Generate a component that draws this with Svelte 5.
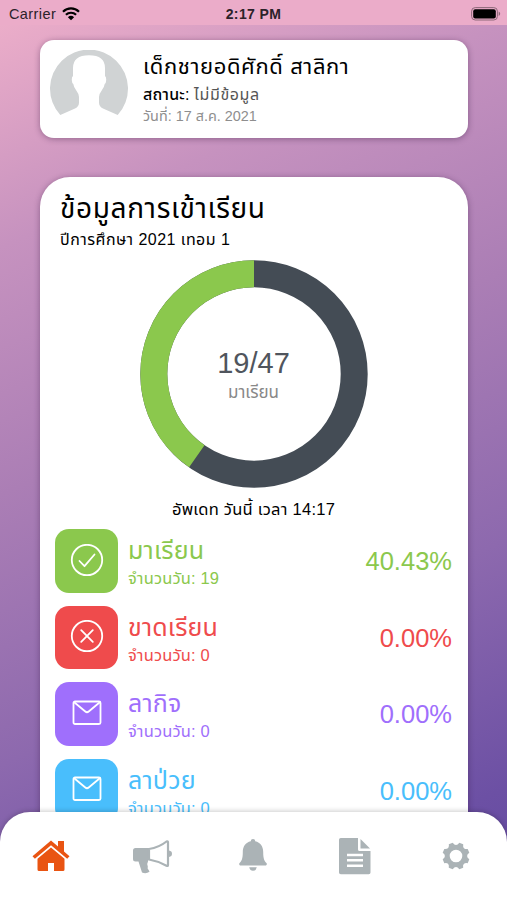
<script>
	let student = {
		name: 'เด็กชายอดิศักดิ์ สาลิกา',
		status: 'ไม่มีข้อมูล',
		date: '17 ส.ค. 2021'
	};

	let present = 19;
	let total = 47;

	let rows = [
		{ title: 'มาเรียน', days: 19, color: '#8bc84d', icon: 'check' },
		{ title: 'ขาดเรียน', days: 0, color: '#ef4b4c', icon: 'cross' },
		{ title: 'ลากิจ', days: 0, color: '#9f6ffc', icon: 'mail' },
		{ title: 'ลาป่วย', days: 0, color: '#49befc', icon: 'mail' }
	];

	const radius = 100.2;
	const circumference = 2 * Math.PI * radius;
	const arc = (present / total) * circumference;

	/**
	 * @param {number} days
	 */
	function percent(days) {
		return ((days / total) * 100).toFixed(2) + '%';
	}
</script>

<div class="app">
	<header class="status-bar">
		<div class="carrier">
			<span>Carrier</span>
			<svg width="18" height="14" viewBox="0 0 18 14">
				<path d="M1 4.7a11.5 11.5 0 0 1 16 0M3.9 7.8a7.4 7.4 0 0 1 10.2 0" />
				<path class="dot" d="M9 13.3 5.9 10.2a4.5 4.5 0 0 1 6.2 0z" />
			</svg>
		</div>
		<div class="clock">2:17 PM</div>
		<div class="battery">
			<svg width="30" height="14" viewBox="0 0 30 14">
				<rect class="case" x="0.6" y="0.6" width="25.8" height="12.4" rx="3.6" />
				<rect x="2.2" y="2.2" width="22.6" height="9.2" rx="2" />
				<path class="cap" d="M27.7 4.6c2 .9 2 3.5 0 4.4z" />
			</svg>
		</div>
	</header>

	<main>
		<section class="card profile">
			<svg class="avatar" width="78" height="66" viewBox="0 0 78 66">
				<path
					d="M10.3 65A39 39 0 1 1 67.700 65L53 58.500q-4-2-4-6V47q0-3 2.700-6.500 2.600-3.500 3-6.500 1.300-.5 1.500-4 .1-3-1.200-4V18Q55 5.200 39 5.200T23 18v8q-1.300 1-1.200 4 .2 3.500 1.500 4 .4 3 3 6.500Q29 44 29 47v5.500q0 4-4 6z"
				/>
			</svg>
			<div class="info">
				<div class="name">{student.name}</div>
				<div class="state"><b>สถานะ:</b> <span>{student.status}</span></div>
				<div class="date">วันที่: {student.date}</div>
			</div>
		</section>

		<section class="card attendance">
			<h1>ข้อมูลการเข้าเรียน</h1>
			<p class="term">ปีการศึกษา 2021 เทอม 1</p>

			<div class="chart">
				<svg width="228" height="228" viewBox="0 0 228 228">
					<g transform="rotate(-90 114 114)">
						<circle class="track" cx="114" cy="114" r={radius} />
						<circle
							class="value"
							cx="114"
							cy="114"
							r={radius}
							stroke-dasharray="{arc} {circumference - arc}"
							stroke-dashoffset={arc}
						/>
					</g>
				</svg>
				<div class="chart-label">
					<div class="count">{present}/{total}</div>
					<div class="caption">มาเรียน</div>
				</div>
			</div>

			<p class="updated">อัพเดท วันนี้ เวลา 14:17</p>

			<ul>
				{#each rows as row}
					<li style="color: {row.color};">
						<div class="tile" style="background-color: {row.color};">
							<svg width="34" height="34" viewBox="0 0 34 34">
								{#if row.icon === 'check'}
									<circle cx="17" cy="16" r="15.2" />
									<path d="m9.5 17 5 5.200L24.500 10.500" />
								{:else if row.icon === 'cross'}
									<circle cx="17" cy="16" r="15.2" />
									<path d="m11.2 10.200 11.600 11.600m0-11.600L11.200 21.800" />
								{:else}
									<rect x="3.500" y="4.500" width="27" height="22.500" rx="1.500" />
									<path d="m4.500 5.500 10.800 9q1.700 1.400 3.400 0l10.800-9" />
								{/if}
							</svg>
						</div>
						<div class="text">
							<div class="title">{row.title}</div>
							<div class="days">จำนวนวัน: {row.days}</div>
						</div>
						<div class="percent">{percent(row.days)}</div>
					</li>
				{/each}
			</ul>
		</section>
	</main>

	<nav>
		<div class="tab active">
			<svg width="40" height="40" viewBox="0 0 40 40">
				<path
					d="M20 4.500 1.500 20.200l2.400 2.600L20 9.200l16.200 13.600 2.300-2.600-5.500-4.700V5h-6v5.400z"
				/>
				<path d="M20 11.400 6.500 22.700v10.800q0 1.500 1.500 1.500h9v-8h6v8h9q1.500 0 1.500-1.500V22.700z" />
			</svg>
		</div>
		<div class="tab">
			<svg width="42" height="40" viewBox="0 0 42 40">
				<path
					d="M4.500 12H17v13.500q-1.500 2.500-.2 5-.8 2 1 3.800l.7 1.500q-3.500 2.500-7.500.7-1.700-5.500-3.500-11H4.500Q2 25.500 2 23v-8.500Q2 12 4.500 12z"
				/>
				<path class="horn" d="M18 13q10-1.500 17.500-7.500 1.500-.7 1.500 1v22.500q0 1.500-1.500.8Q27 25 18 23.500z" />
				<path d="M38 14.500q3 .5 3 3.200t-3 3.300z" />
			</svg>
		</div>
		<div class="tab">
			<svg width="32" height="40" viewBox="0 0 32 40">
				<path
					d="M16 3a2.200 2.200 0 0 0-2.200 2.300C8.500 6.500 5.800 10.700 5.800 16c0 7-1.300 9-3.200 11q-1.100 1.300.4 2.500h26q1.500-1.200.4-2.500c-1.900-2-3.200-4-3.200-11 0-5.300-2.700-9.500-8-10.700A2.200 2.200 0 0 0 16 3zM12.200 31.300h7.600q-.8 3.500-3.800 3.500t-3.800-3.500z"
				/>
			</svg>
		</div>
		<div class="tab">
			<svg width="34" height="40" viewBox="0 0 34 40">
				<path
					fill-rule="evenodd"
					d="M2.800 2H20v11.500q0 1.500 1.500 1.500H32.500v21.500q0 1.800-1.800 1.800H2.800Q1 38.300 1 36.500V3.800Q1 2 2.800 2zM9 17.800v2.400h16v-2.400zm0 5.200v2.600h16V23zm0 5.400V31h16v-2.600z"
				/>
				<path d="M22.500 3 32 12.500H22.500z" />
			</svg>
		</div>
		<div class="tab">
			<svg width="30" height="30" viewBox="0 0 30 30">
				<path
					fill-rule="evenodd"
					d="M11.700 1.700Q13.300 3.900 15 3.900t3.300-2.200l3.900 1.600Q21.800 6 23 7.200t3.700.8l1.600 3.700Q26.100 13.300 26.100 15t2.200 3.300l-1.600 3.900Q24 21.800 22.800 23t-.6 3.700l-3.900 1.600Q16.700 26.100 15 26.100t-3.300 2.200l-3.900-1.600Q8.200 24 7 22.800t-3.700-.6l-1.600-3.900Q3.900 16.700 3.900 15t-2.200-3.300L3.300 8Q6 8.200 7.200 7t.6-3.700zM15 8.700a6.300 6.300 0 1 0 0 12.600 6.300 6.300 0 0 0 0-12.600z"
				/>
			</svg>
		</div>
	</nav>
</div>

<style>
	:global(body) {
		margin: 0;
	}

	.app {
		display: flex;
		flex-direction: column;
		height: 100vh;
		overflow: hidden;
		font-family: 'Liberation Sans', 'Noto Sans Thai', 'Noto Sans', sans-serif;
		color: #000;
		background: linear-gradient(
			156deg,
			#efb0ca 0%,
			#c692bf 22%,
			#ab7eb5 44%,
			#8d69ae 68%,
			#6c50a4 90%,
			#6249a0 100%
		);
	}

	.status-bar {
		display: grid;
		grid-template-columns: 1fr auto 1fr;
		align-items: center;
		box-sizing: border-box;
		flex: none;
		height: 25px;
		padding: 2px 6px 0 9px;
		background: #ebacc9;
		font-size: 14.5px;
	}

	.carrier {
		display: flex;
		align-items: center;
		gap: 6px;
		color: #2b2229;
		letter-spacing: 0.4px;
	}

	.carrier path {
		fill: none;
		stroke: #000;
		stroke-width: 2.2;
	}

	.carrier .dot {
		fill: #000;
		stroke: none;
	}

	.clock {
		margin-right: 3px;
		font-weight: bold;
		font-size: 14px;
		letter-spacing: 0.4px;
		color: #2b2229;
	}

	.battery {
		display: flex;
		justify-content: flex-end;
	}

	.case {
		fill: none;
		stroke: #8d6879;
	}

	.cap {
		fill: #8d6879;
	}

	main {
		flex: 1;
		min-height: 0;
		overflow: hidden;
		padding: 15px 39px 0 40px;
	}

	.card {
		box-sizing: border-box;
		background: #fff;
		box-shadow: 0 1px 6px rgba(50, 20, 60, 0.4);
	}

	.profile {
		display: flex;
		gap: 15px;
		height: 98px;
		padding: 10px;
		border-radius: 14px;
	}

	.avatar {
		flex: none;
		fill: #d0d3d4;
	}

	.info {
		white-space: nowrap;
	}

	.name {
		height: 34px;
		line-height: 34px;
		font-size: 22px;
		letter-spacing: 0.6px;
	}

	.state {
		height: 21px;
		line-height: 21px;
		font-size: 16px;
		letter-spacing: 0.15px;
	}

	.state b {
		font-weight: 500;
	}

	.state span {
		color: #555;
		letter-spacing: 0.6px;
	}

	.date {
		height: 22px;
		line-height: 22px;
		font-size: 14.4px;
		color: #8e8e8e;
	}

	.attendance {
		height: 760px;
		margin-top: 39px;
		padding: 12px 16px 0 15px;
		border-radius: 30px;
	}

	h1 {
		height: 40px;
		margin: 0 0 0 5px;
		line-height: 40px;
		font-size: 28px;
		font-weight: normal;
		letter-spacing: 0.65px;
	}

	.term {
		height: 22px;
		margin: 0 0 0 5px;
		line-height: 22px;
		font-size: 16px;
		letter-spacing: 0.45px;
	}

	.chart {
		display: grid;
		place-items: center;
		height: 228px;
		margin-top: 9px;
	}

	.chart > * {
		grid-area: 1 / 1;
	}

	.chart circle {
		fill: none;
		stroke-width: 27;
	}

	.track {
		stroke: #444c55;
	}

	.chart .value {
		stroke: #8bc84d;
	}

	.chart-label {
		padding-top: 3px;
		text-align: center;
	}

	.count {
		line-height: 34px;
		font-size: 29px;
		color: #50555d;
	}

	.caption {
		line-height: 25px;
		font-size: 17px;
		color: #888;
	}

	.updated {
		height: 24px;
		margin: 9px 0 8px;
		line-height: 25px;
		text-align: center;
		font-size: 16.5px;
		letter-spacing: 0.25px;
	}

	ul {
		display: flex;
		flex-direction: column;
		gap: 13px;
		margin: 0;
		padding: 0;
		list-style: none;
	}

	li {
		display: flex;
		align-items: center;
		height: 63.5px;
	}

	.tile {
		display: grid;
		place-items: center;
		width: 63px;
		height: 63.5px;
		border-radius: 14px;
	}

	.tile svg {
		fill: none;
		stroke: #fff;
		stroke-width: 1.8;
		stroke-linecap: round;
		stroke-linejoin: round;
	}

	.text {
		flex: 1;
		margin-left: 10px;
		padding-top: 3px;
	}

	.title {
		height: 32px;
		line-height: 32px;
		font-size: 25px;
		letter-spacing: 0.2px;
	}

	.days {
		height: 24px;
		line-height: 25px;
		font-size: 16.5px;
		letter-spacing: 0.15px;
	}

	.percent {
		padding-top: 2px;
		font-size: 25.5px;
	}

	nav {
		display: grid;
		grid-template-columns: repeat(5, 1fr);
		flex: none;
		z-index: 1;
		height: 88px;
		border-radius: 30px 30px 0 0;
		background: #fff;
		box-shadow: 0 -1px 5px rgba(0, 0, 0, 0.2);
	}

	.tab {
		display: flex;
		justify-content: center;
		align-items: center;
		height: 87px;
		fill: #abb3b6;
	}

	.horn {
		fill: none;
		stroke: #abb3b6;
		stroke-width: 2.2;
	}

	.active {
		fill: #e95412;
	}
</style>
